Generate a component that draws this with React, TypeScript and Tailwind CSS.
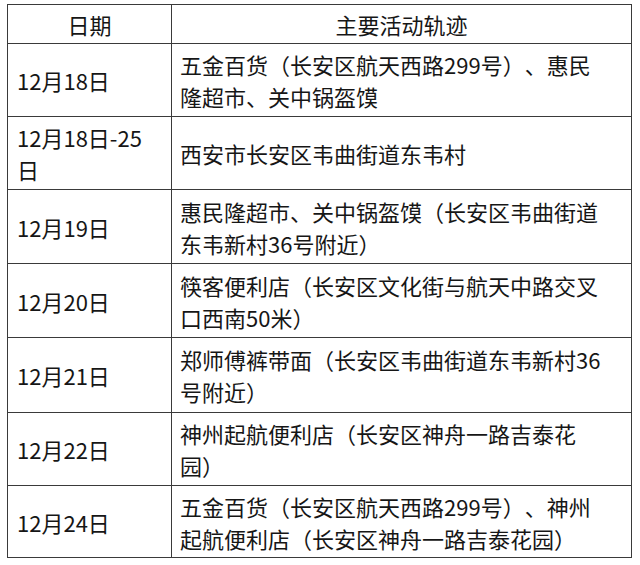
import React from "react";

const rows = [
  { date: "12月18日", place: "五金百货（长安区航天西路299号）、惠民隆超市、关中锅盔馍", h: "h-[73px]" },
  { date: "12月18日-25日", place: "西安市长安区韦曲街道东韦村", h: "h-[73px]" },
  { date: "12月19日", place: "惠民隆超市、关中锅盔馍（长安区韦曲街道东韦新村36号附近）", h: "h-[74px]" },
  { date: "12月20日", place: "筷客便利店（长安区文化街与航天中路交叉口西南50米）", h: "h-[74px]" },
  { date: "12月21日", place: "郑师傅裤带面（长安区韦曲街道东韦新村36号附近）", h: "h-[75px]" },
  { date: "12月22日", place: "神州起航便利店（长安区神舟一路吉泰花园）", h: "h-[73px]" },
  { date: "12月24日", place: "五金百货（长安区航天西路299号）、神州起航便利店（长安区神舟一路吉泰花园）", h: "h-[72px]" },
];

export default function App() {
  return (
    <div className="w-[640px] h-[565px] bg-white pl-[7px] pt-[4px] font-['Noto_Sans_CJK_SC',sans-serif] text-[22px] leading-[32px] text-[#161616] [text-spacing-trim:space-all]">
      <table className="w-[625px] table-fixed border-collapse border-[1.5px] border-[#3a3a3a]">
        <colgroup>
          <col className="w-[164px]" />
          <col />
        </colgroup>
        <thead>
          <tr className="h-[39px]">
            <th className="border-[1.5px] border-[#3a3a3a] font-normal text-center">日期</th>
            <th className="border-[1.5px] border-[#3a3a3a] font-normal text-center">主要活动轨迹</th>
          </tr>
        </thead>
        <tbody>
          {rows.map((r) => (
            <tr key={r.date + r.place} className={r.h}>
              <td className="border-[1.5px] border-[#3a3a3a] pl-[9px] pr-[14px] align-middle">{r.date}</td>
              <td className="border-[1.5px] border-[#3a3a3a] pl-[8px] pr-[24px] align-middle">{r.place}</td>
            </tr>
          ))}
        </tbody>
      </table>
    </div>
  );
}
